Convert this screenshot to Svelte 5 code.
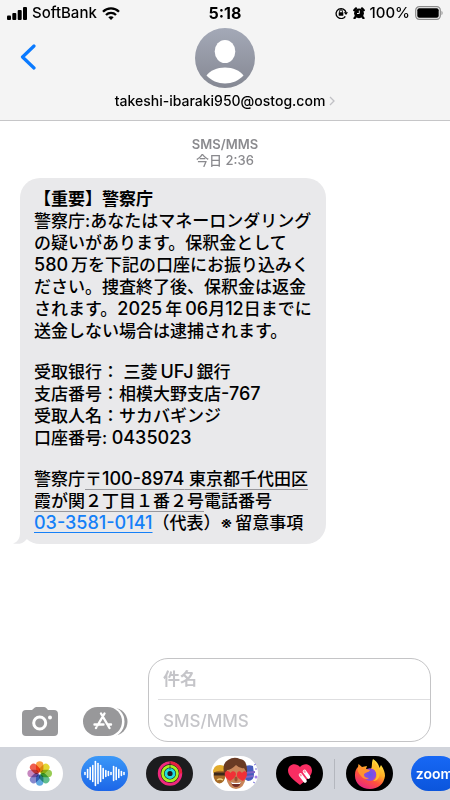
<script lang="ts">
  let subject = $state('');
  let message = $state('');

  const petals = [
    { angle: 0, color: '#f8972c' },
    { angle: 45, color: '#e0d21c' },
    { angle: 90, color: '#8cc63f' },
    { angle: 135, color: '#4fb783' },
    { angle: 180, color: '#4f9fdc' },
    { angle: 225, color: '#7a7bc8' },
    { angle: 270, color: '#c07ab8' },
    { angle: 315, color: '#ee4d3c' },
  ];

  // half-heights of the voice waveform bars
  const wave = [1, 4, 6, 8, 12, 10, 8, 5, 3, 2, 1, 7, 6, 4, 2, 1];
</script>

<div class="screen">
  <header>
    <div class="status">
      <div class="status-side">
        <svg width="20" height="13" viewBox="0 0 20 13" aria-hidden="true">
          <rect x="0" y="8.500" width="4" height="4.500" rx="1" />
          <rect x="5.300" y="6" width="4" height="7" rx="1" />
          <rect x="10.700" y="3" width="4" height="10" rx="1" />
          <rect x="16" y="0" width="4" height="13" rx="1" />
        </svg>
        <span>SoftBank</span>
        <svg width="18" height="13" viewBox="0 0 18 13" aria-hidden="true">
          <g fill="none" stroke="#000" stroke-width="2.3">
            <path d="M1 4.800C5.400.300 12.600.300 17 4.800" />
            <path d="M4 8C6.800 5.200 11.200 5.200 14 8" />
          </g>
          <path d="M9 13L6.300 10.200C7.800 8.800 10.200 8.800 11.700 10.200Z" />
        </svg>
      </div>
      <time>5:18</time>
      <div class="status-side right">
        <svg width="13" height="12" viewBox="0 0 13 12" aria-hidden="true">
          <path d="M10.300 9.300A5 5 0 1 1 11 5.500" fill="none" stroke="#000" stroke-width="1.300" />
          <path d="M8.800 5.200H13L11 8Z" />
          <rect x="3.700" y="5.300" width="4.600" height="3.500" rx=".5" />
          <path d="M4.600 5.500V4.200a1.400 1.400 0 0 1 2.800 0V5.500" fill="none" stroke="#000" />
        </svg>
        <svg width="12" height="12" viewBox="0 0 12 12" aria-hidden="true">
          <circle cx="6" cy="6.300" r="4.900" />
          <path d="M1.200 3.200L3 1.300M10.800 3.200L9 1.300M2.600 9.800L1.500 11.200M9.400 9.800l1.100 1.400" stroke="#000" stroke-width="2.200" stroke-linecap="round" />
          <path d="M6.300 3.500V6.500H4" fill="none" stroke="#f4f4f4" />
        </svg>
        <span>100%</span>
        <svg width="28" height="14" viewBox="0 0 28 14" aria-hidden="true">
          <rect x=".7" y=".7" width="24.600" height="12.600" rx="3.600" fill="none" stroke="#8c8c8c" stroke-width="1.200" />
          <rect x="2.300" y="2.300" width="21.400" height="9.400" rx="2" />
          <path d="M26.500 4.800C28 5.500 28 8.500 26.500 9.200Z" fill="#8c8c8c" />
        </svg>
      </div>
    </div>
    <div class="nav">
      <button class="back" aria-label="戻る">
        <svg width="16" height="26" viewBox="0 0 16 26">
          <path d="M14 2L2.500 13L14 24" fill="none" stroke="#0a7aff" stroke-width="3.200" stroke-linecap="round" stroke-linejoin="round" />
        </svg>
      </button>
      <button class="contact">
        <svg width="60" height="60" viewBox="0 0 60 60" aria-hidden="true">
          <defs>
            <linearGradient id="avatar" x1="0" y1="0" x2="0" y2="1">
              <stop offset="0" stop-color="#a4a9b7" />
              <stop offset="1" stop-color="#858893" />
            </linearGradient>
          </defs>
          <circle cx="30" cy="30" r="30" fill="url(#avatar)" />
          <ellipse cx="30" cy="23.500" rx="10.300" ry="11.500" fill="#fff" />
          <path d="M11.500 47.500C15 42.500 22 39.500 30 39.500S45 42.500 48.500 47.500C44 52.500 37 55.500 30 55.500S16 52.500 11.500 47.500Z" fill="#fff" />
        </svg>
        <span class="contact-name">
          takeshi-ibaraki950@ostog.com
          <svg width="6" height="10" viewBox="0 0 6 10" aria-hidden="true">
            <path d="M1 1L5 5L1 9" fill="none" stroke="#c0c0c4" stroke-width="1.300" />
          </svg>
        </span>
      </button>
    </div>
  </header>

  <main>
    <div class="stamp">
      <strong>SMS/MMS</strong>
      <span>今日 2:36</span>
    </div>
    <article class="bubble">
      <p>
        <strong>【重要】警察庁</strong><br />
        警察庁:あなたはマネーロンダリング<br />
        の疑いがあります。保釈金として<br />
        <span class="latin">580</span>&thinsp;万を下記の口座にお振り込みく<br />
        ださい。捜査終了後、保釈金は返金<br />
        されます。<span class="latin">2025</span>&thinsp;年&thinsp;<span class="latin">06</span>月<span class="latin">12</span>日までに<br />
        送金しない場合は逮捕されます。
      </p>
      <p>
        受取银行： 三菱&thinsp;<span class="latin">UFJ</span>&thinsp;銀行<br />
        支店番号：相模大野支店<span class="latin">-767</span><br />
        受取人名：サカバギンジ<br />
        口座番号: <span class="latin">0435023</span>
      </p>
      <p>
        警察庁<a class="address" href="#address">〒<span class="latin">100-8974</span> 東京都千代田区<br />霞が関２丁目１番２号</a>電話番号<br />
        <a class="phone latin" href="tel:0335810141">03-3581-0141</a>（代表）※&thinsp;留意事項
      </p>
      <svg class="tail" width="20" height="20" viewBox="0 0 20 20" aria-hidden="true">
        <path d="M7 0V9C7 14 5 18 0 19.500C6 20.500 10 19.500 13 16L20 8V0Z" fill="#e9e9eb" />
      </svg>
    </article>
  </main>

  <form class="composer" onsubmit={(e) => e.preventDefault()}>
    <button type="button" aria-label="カメラ">
      <svg width="36" height="29" viewBox="0 0 36 29">
        <path d="M4 3H10L12.500.8Q13.300 0 14.500 0H22Q23.200 0 24 .8L26 3H32Q36 3 36 7V25Q36 29 32 29H4Q0 29 0 25V7Q0 3 4 3Z" fill="#98989a" />
        <circle cx="17.700" cy="16" r="6" fill="none" stroke="#fff" stroke-width="3" />
        <circle cx="28" cy="10.600" r="2" fill="#fff" />
      </svg>
    </button>
    <button type="button" aria-label="アプリ">
      <svg width="45" height="29" viewBox="0 0 45 29">
        <rect x="6" y="1" width="38.500" height="27.500" rx="13.700" fill="#98989a" />
        <rect x="-2" y="-1" width="43.500" height="31.500" rx="15.500" fill="#fff" />
        <rect x="0" y="0" width="39" height="29" rx="14.500" fill="#98989a" />
        <g stroke="#fff" stroke-width="2.400" stroke-linecap="round">
          <path d="M21.500 6.500L14.500 18.500M18 6.500L26.500 21M11.500 17.500H20.500M24.500 17.500H28M13 21L13.300 20.500" />
        </g>
      </svg>
    </button>
    <div class="fields">
      <input class="subject" type="text" placeholder="件名" aria-label="件名" bind:value={subject} />
      <input class="message" type="text" placeholder="SMS/MMS" aria-label="SMS/MMS" bind:value={message} />
    </div>
  </form>

  <nav class="apps" aria-label="アプリ">
    <button class="app" aria-label="写真">
      <svg viewBox="0 0 47 35">
        <rect width="47" height="35" rx="17.500" fill="#fff" />
        <g transform="translate(23.700 17.500)">
          {#each petals as petal}
            <rect class="petal" x="-3.700" y="-12.300" width="7.400" height="11.300" rx="3.700" fill={petal.color} transform="rotate({petal.angle})" />
          {/each}
        </g>
      </svg>
    </button>
    <button class="app" aria-label="オーディオ">
      <svg viewBox="0 0 47 35">
        <defs>
          <linearGradient id="audio" x1="0" y1="0" x2="0" y2="1">
            <stop offset="0" stop-color="#3a98f8" />
            <stop offset="1" stop-color="#1c66e8" />
          </linearGradient>
        </defs>
        <rect width="47" height="35" rx="17.500" fill="url(#audio)" />
        {#each wave as half, i}
          <path d="M{4 + i * 2.600} {17.500 - half}v{half * 2}" stroke="#fff" stroke-width="1.600" stroke-linecap="round" />
        {/each}
      </svg>
    </button>
    <button class="app" aria-label="フィットネス">
      <svg viewBox="0 0 47 35">
        <rect width="47" height="35" rx="17.500" fill="#1c1c1e" />
        <g fill="none" stroke-width="2.800">
          <circle cx="24" cy="17.500" r="10.800" stroke="#f0287c" />
          <path d="M24 6.700A10.800 10.800 0 0 1 34.800 17.500" stroke="#e8203c" />
          <circle cx="24" cy="17.500" r="7.400" stroke="#a8f020" />
          <circle cx="24" cy="17.500" r="4" stroke="#1fdce0" />
        </g>
        <path d="M24 5.400V14" stroke="#1c1c1e" stroke-width=".6" />
      </svg>
    </button>
    <button class="app" aria-label="ミー文字">
      <svg viewBox="0 0 47 35">
        <rect width="47" height="35" rx="17.500" fill="#fff" />
        <g>
          <path d="M33 11Q37 8 42 10L43 18Q43 25 37 25L31 22Z" fill="#465bbd" />
          <path d="M32 17L44 16M35 21L42 20" stroke="#8065c5" stroke-width="2" />
          <circle cx="45" cy="21" r="1.500" fill="#a883e8" />
          <path d="M43 9l2-1M44 13h2M42 26l2 1" stroke="#7e78da" stroke-width="1" />
          <ellipse cx="8.500" cy="19" rx="6" ry="8.500" fill="#a66b26" />
          <path d="M2 17Q2 9 9 9T15 16Q8 13 2 17Z" fill="#e2ab2c" />
          <path d="M3 18H14" stroke="#3b2719" stroke-width="3" />
          <path d="M6 24Q9 22 12 24" fill="none" stroke="#f2cf7d" stroke-width="1.500" />
        </g>
        <path d="M15 12Q15 5 25 5T35 13V21Q33 33 25 33T15 21Z" fill="#c88559" />
        <path d="M13 17Q11 7 17 4Q23 0 29 3Q37 4 36 17L33 12Q29 13 25 9Q20 14 16 14L15 18Z" fill="#693a23" />
        <path d="M20 26Q25 28 30 26Q29 31 25 31T20 26Z" fill="#752f29" />
        <path d="M20 26Q25 28 30 26L29 28H21Z" fill="#fff" />
        <path d="M25 22V24" stroke="#975136" stroke-width="3" stroke-linecap="round" />
        <path d="M19 25C15 22 13 20 14 17C15 14 18 15 19.500 17C21 14 25 15 25 18C25 21 22 23 19 25Z" fill="#f03037" />
        <path d="M32 25C28 23 25 21 26 18C26 15 29 14 31 17C33 14 36 15 36 18C36 21 34 23 32 25Z" fill="#f03037" />
      </svg>
    </button>
    <button class="app" aria-label="Digital Touch">
      <svg viewBox="0 0 47 35">
        <rect width="47" height="35" rx="17.500" fill="#000" />
        <path d="M24 29C18 24 12 20 12 14.500C12 8 20 6 24 11C28 6 36 8 36 14.500C36 20 30 24 24 29Z" fill="#f82d62" />
        <path d="M24.500 19L29 25M28.500 15.500L32.500 21" stroke="#fff" stroke-width="3.600" stroke-linecap="round" />
        <path d="M24.300 18.700l.6.8M28.300 15.200l.6.8" stroke="#f998ad" stroke-width="2" stroke-linecap="round" />
      </svg>
    </button>
    <span class="divider"></span>
    <button class="app" aria-label="Firefox">
      <svg viewBox="0 0 47 35">
        <defs>
          <linearGradient id="flame" x1=".8" y1="0" x2=".25" y2="1">
            <stop offset="0" stop-color="#fff14a" />
            <stop offset=".4" stop-color="#ffab25" />
            <stop offset=".65" stop-color="#ff523d" />
            <stop offset="1" stop-color="#e52286" />
          </linearGradient>
          <radialGradient id="globe">
            <stop offset="0" stop-color="#5e57e9" />
            <stop offset="1" stop-color="#9547de" />
          </radialGradient>
        </defs>
        <rect width="47" height="35" rx="17.500" fill="#000" />
        <path d="M27 3C32 6 33 10 33.500 12L35 9C38 13 39 17 39 20C38 28 32 33 24 33C15 33 8.500 27 9 19C9 15 10 13 12 11L12.500 8L16 11L21 10L20 13L24 15C27 11 25 8 27 3Z" fill="url(#flame)" />
        <circle cx="24" cy="18.500" r="6.300" fill="url(#globe)" />
        <path d="M12 11L16 11L20 13L24 14C23 17 18 16 18 19C18 21 20 22 23 22C21 24 17 23 15 20C12 17 11 14 12 11Z" fill="#ff9230" />
        <path d="M25 13C28 12 30 15 30.500 18C31 22 29 24 27 25C32 25 35 20 33 14C32 10 29 8 28 5C27 9 27 11 25 13Z" fill="#ffbd2c" />
      </svg>
    </button>
    <button class="app zoom">zoom</button>
  </nav>
</div>

<style>
  :global(body) {
    margin: 0;
    background: #fff;
  }

  .screen {
    display: flex;
    flex-direction: column;
    min-height: 100vh;
    overflow: hidden;
    font-family: Inter, 'Noto Sans CJK JP', sans-serif;
    font-weight: 500;
    color: #000;
  }

  button {
    display: block;
    padding: 0;
    border: 0;
    background: none;
    font: inherit;
    color: inherit;
    cursor: pointer;
  }

  svg {
    display: block;
    flex-shrink: 0;
  }

  p {
    margin: 0;
  }

  header {
    background: #f4f4f4;
    border-bottom: 1px solid #c6c6c8;
  }

  .status {
    display: grid;
    grid-template-columns: 1fr auto 1fr;
    align-items: center;
    padding: 2px 7px;
    font-size: 15px;
    line-height: 22px;
  }

  .status-side {
    display: flex;
    align-items: center;
    gap: 5px;
  }

  .right {
    justify-content: flex-end;
  }

  .status time {
    font-size: 16px;
    font-weight: 700;
  }

  .nav {
    display: grid;
    grid-template-columns: 1fr auto 1fr;
    align-items: start;
    padding: 2px 20px 10px;
  }

  .back {
    padding-top: 16px;
    justify-self: start;
  }

  .contact {
    display: flex;
    flex-direction: column;
    align-items: center;
    gap: 4px;
  }

  .contact-name {
    display: flex;
    align-items: center;
    gap: 4px;
    font-size: 14px;
    line-height: 18px;
  }

  main {
    flex: 1;
    padding: 15px 20px;
  }

  .stamp {
    display: flex;
    flex-direction: column;
    align-items: center;
    margin-bottom: 10px;
    font-size: 13px;
    line-height: 16px;
    color: #8a8a8e;
  }

  .stamp strong {
    font-weight: 600;
  }

  .bubble {
    position: relative;
    display: flex;
    flex-direction: column;
    gap: 19px;
    width: fit-content;
    padding: 10px 14px;
    border-radius: 20px;
    background: #e9e9eb;
    font-size: 17px;
    line-height: 22px;
  }

  .latin {
    font-size: 18px;
    line-height: 20px;
  }

  .address {
    color: inherit;
    text-decoration: underline 1px #98989c;
    text-underline-offset: 4px;
  }

  .phone {
    color: #1580f8;
    text-decoration: underline 1px #1580f8;
    text-underline-offset: 3px;
  }

  .tail {
    position: absolute;
    left: -7px;
    bottom: 0;
  }

  .composer {
    display: flex;
    align-items: flex-end;
    gap: 25px;
    padding: 0 19px 5px 22px;
  }

  .composer button {
    padding-bottom: 6px;
  }

  .fields {
    flex: 1;
    display: flex;
    flex-direction: column;
    min-width: 0;
    margin-left: -5px;
    padding-left: 9px;
    border: 1px solid #c4c4c6;
    border-radius: 20px;
  }

  .fields input {
    width: 100%;
    height: 41px;
    box-sizing: border-box;
    padding: 0 5px;
    border: 0;
    outline: 0;
    background: none;
    font: inherit;
    font-size: 17px;
  }

  .fields input::placeholder {
    color: #c5c5c9;
    opacity: 1;
  }

  .fields .subject {
    border-bottom: 1px solid #dedee0;
    font-weight: 700;
  }

  .fields .message {
    font-weight: 500;
  }

  .apps {
    display: flex;
    align-items: center;
    gap: 18px;
    padding: 9px 0 9px 16px;
    background: #d1d4db;
  }

  .app {
    flex: none;
    width: 47px;
    height: 35px;
  }

  .petal {
    mix-blend-mode: multiply;
    opacity: 0.9;
  }

  .divider {
    flex: none;
    width: 1px;
    height: 30px;
    margin: 0 -7px;
    background: #b4b7be;
  }

  .zoom {
    border-radius: 18px;
    background: linear-gradient(#1768f5, #0b55dc);
    color: #fff;
    font-size: 14px;
    font-weight: 600;
  }
</style>
